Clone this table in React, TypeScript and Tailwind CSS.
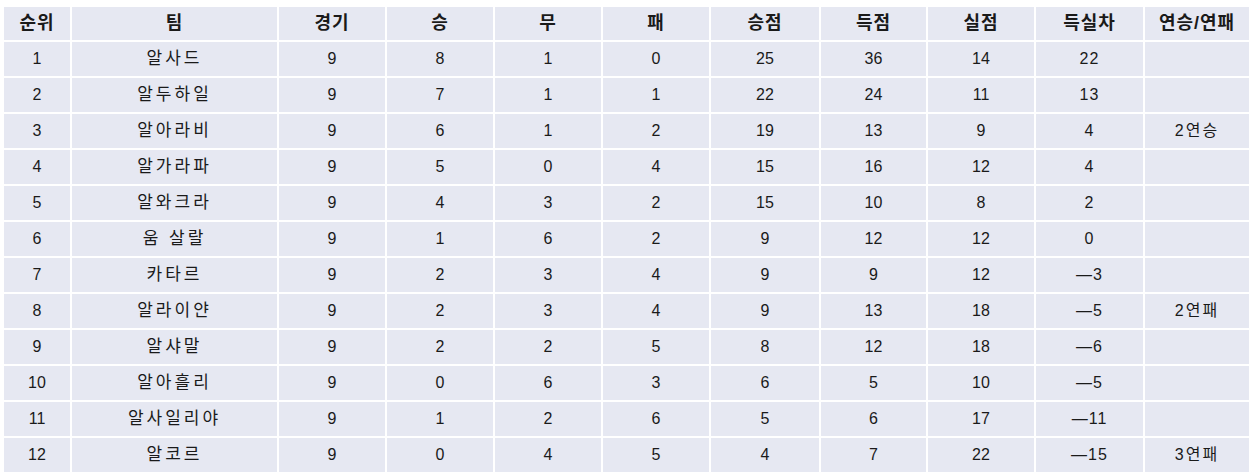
const HEADERS = ['순위', '팀', '경기', '승', '무', '패', '승점', '득점', '실점', '득실차', '연승/연패'];

const WIDTHS = ['w-[66px]', 'w-[205px]', 'w-[106px]', 'w-[106px]', 'w-[106px]', 'w-[106px]', 'w-[108px]', 'w-[105px]', 'w-[106px]', 'w-[107px]', 'w-[104px]'];

const ROWS: (string | number)[][] = [
  [1, '알사드', 9, 8, 1, 0, 25, 36, 14, '22', ''],
  [2, '알두하일', 9, 7, 1, 1, 22, 24, 11, '13', ''],
  [3, '알아라비', 9, 6, 1, 2, 19, 13, 9, '4', '2연승'],
  [4, '알가라파', 9, 5, 0, 4, 15, 16, 12, '4', ''],
  [5, '알와크라', 9, 4, 3, 2, 15, 10, 8, '2', ''],
  [6, '움 살랄', 9, 1, 6, 2, 9, 12, 12, '0', ''],
  [7, '카타르', 9, 2, 3, 4, 9, 9, 12, '—3', ''],
  [8, '알라이얀', 9, 2, 3, 4, 9, 13, 18, '—5', '2연패'],
  [9, '알샤말', 9, 2, 2, 5, 8, 12, 18, '—6', ''],
  [10, '알아흘리', 9, 0, 6, 3, 6, 5, 10, '—5', ''],
  [11, '알사일리야', 9, 1, 2, 6, 5, 6, 17, '—11', ''],
  [12, '알코르', 9, 0, 4, 5, 4, 7, 22, '—15', '3연패'],
];

export default function App() {
  return (
    <div className="bg-white w-[1254px] h-[474px] pl-[2px] pt-[5px] font-['Liberation_Sans','Noto_Sans_CJK_KR',sans-serif] text-[#1a1a1a]">
      <table className="border-separate border-spacing-[2px] table-fixed">
        <thead>
          <tr>
            {HEADERS.map((h, i) => (
              <th
                key={h}
                className={`${WIDTHS[i]} h-[33px] p-0 bg-[#e6e8f2] text-center font-bold align-middle text-[18px] tracking-[1px] whitespace-nowrap`}
              >
                {h}
              </th>
            ))}
          </tr>
        </thead>
        <tbody>
          {ROWS.map((row) => (
            <tr key={row[0]}>
              {row.map((cell, i) => (
                <td
                  key={i}
                  className={`h-[34px] p-0 bg-[#e6e8f2] text-center align-middle ${
                    i === 1 ? 'text-[17px] tracking-[3px]' : i === 10 ? 'text-[16px] tracking-[2px]' : i === 9 ? 'text-[16px] tracking-[1px]' : 'text-[16px]'
                  }`}
                >
                  {cell}
                </td>
              ))}
            </tr>
          ))}
        </tbody>
      </table>
    </div>
  );
}
